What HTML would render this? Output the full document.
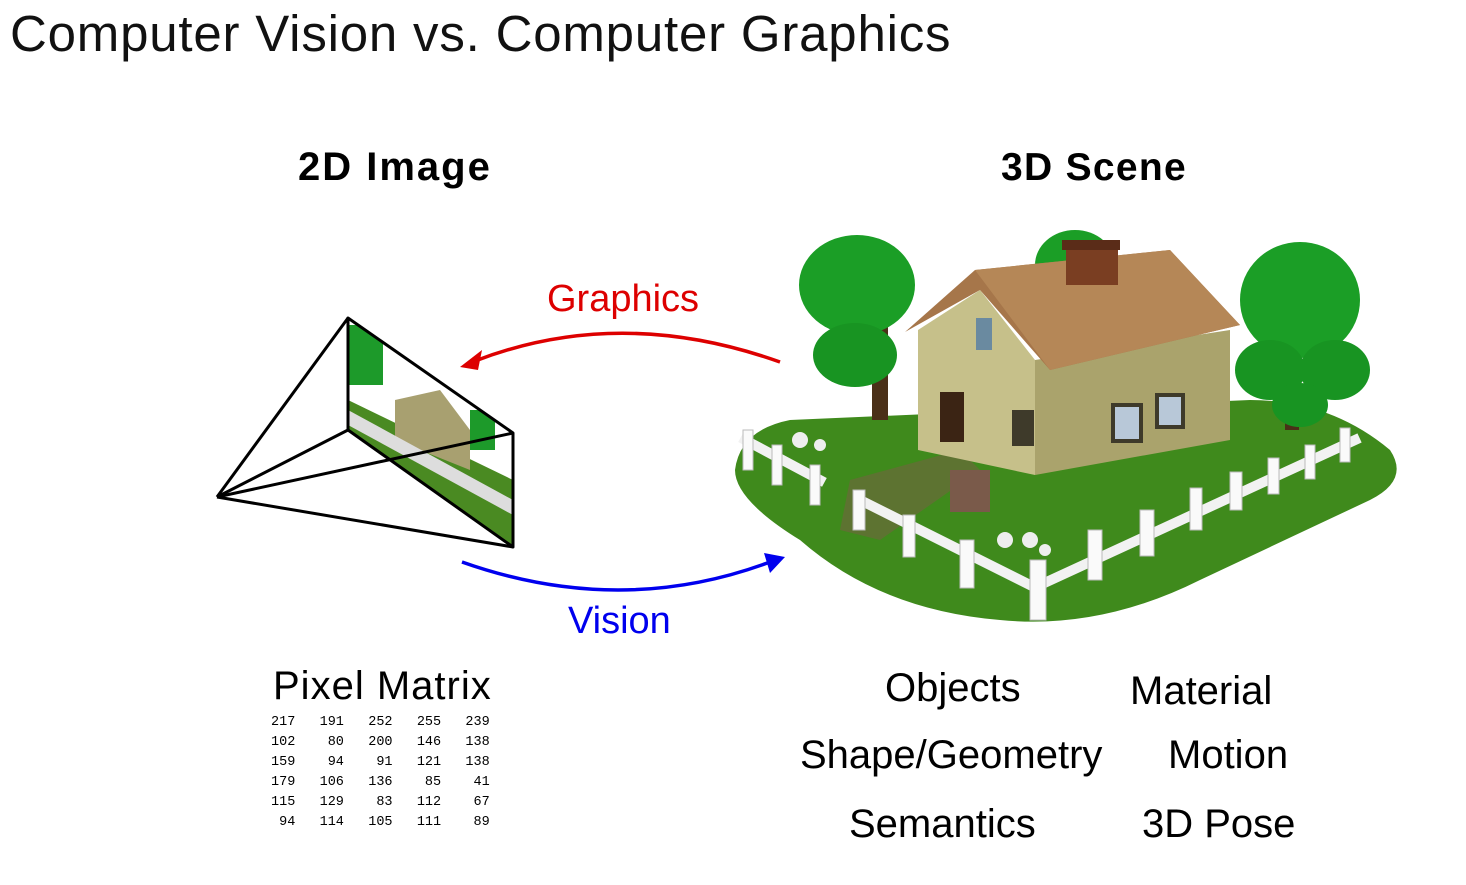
<!DOCTYPE html>
<html><head><meta charset="utf-8"><style>
body{margin:0;width:1466px;height:885px;background:#fff;overflow:hidden;position:relative;font-family:"Liberation Sans",sans-serif}
.t{position:absolute;white-space:nowrap;line-height:1}
pre{position:absolute;margin:0;font-family:"Liberation Mono",monospace;font-size:13.5px;line-height:20px;left:271px;top:713px;color:#000}
</style></head><body>
<div class="t" style="left:10px;top:8px;font-size:51px;color:#111;letter-spacing:0.8px">Computer Vision vs. Computer Graphics</div>
<div class="t" style="left:298px;top:147px;font-size:40px;font-weight:bold;letter-spacing:2px">2D Image</div>
<div class="t" style="left:1001px;top:148px;font-size:39px;font-weight:bold;letter-spacing:1.3px">3D Scene</div>
<div class="t" style="left:547px;top:280px;font-size:38px;color:#d00">Graphics</div>
<div class="t" style="left:568px;top:602px;font-size:38px;color:#00e">Vision</div>
<div class="t" style="left:273px;top:666px;font-size:40px;letter-spacing:1px">Pixel Matrix</div>
<div class="t" style="left:885px;top:668px;font-size:40px">Objects</div>
<div class="t" style="left:1130px;top:671px;font-size:40px">Material</div>
<div class="t" style="left:800px;top:735px;font-size:40px">Shape/Geometry</div>
<div class="t" style="left:1168px;top:735px;font-size:40px">Motion</div>
<div class="t" style="left:849px;top:804px;font-size:40px">Semantics</div>
<div class="t" style="left:1142px;top:804px;font-size:40px">3D Pose</div>
<pre>217   191   252   255   239
102    80   200   146   138
159    94    91   121   138
179   106   136    85    41
115   129    83   112    67
 94   114   105   111    89</pre>
<svg width="1466" height="885" style="position:absolute;left:0;top:0">
<defs>
<clipPath id="q"><polygon points="348,318 513,433 513,547 348,430"/></clipPath>
</defs>
<g clip-path="url(#q)">
<polygon points="348,318 513,433 513,547 348,430" fill="#fff"/>
<polygon points="348,400 513,480 513,547 348,430" fill="#4a8a22"/>
<polygon points="395,400 440,390 470,430 470,470 395,440" fill="#a8a070"/>
<rect x="348" y="325" width="35" height="60" fill="#1d9a2a"/>
<rect x="470" y="410" width="25" height="40" fill="#1d9a2a"/>
<polygon points="348,410 513,500 513,515 348,425" fill="#ddd"/>
</g>
<g stroke="#000" stroke-width="3" fill="none" stroke-linejoin="round">
<polygon points="348,318 513,433 513,547 348,430"/>
<line x1="217" y1="497" x2="348" y2="318"/>
<line x1="217" y1="497" x2="348" y2="430"/>
<line x1="217" y1="497" x2="513" y2="433"/>
<line x1="217" y1="497" x2="513" y2="547"/>
</g>
<path d="M780,362 Q620,305 475,361" stroke="#d00" stroke-width="3.5" fill="none"/>
<polygon points="460,367 482,350 478,370" fill="#d00"/>
<path d="M462,562 Q620,618 770,562" stroke="#00e" stroke-width="3.5" fill="none"/>
<polygon points="785,557 764,553 770,573" fill="#00e"/>
<path d="M735,470 Q740,430 790,420 L1250,400 Q1330,400 1390,450 Q1410,480 1370,500 L1200,580 Q1100,630 1000,620 Q880,610 800,540 Q735,500 735,470Z" fill="#3f8a1c"/>
<path d="M850,480 L960,450 L980,470 L880,540 L840,530Z" fill="#6b6a3a" opacity=".7"/>
<ellipse cx="1075" cy="265" rx="40" ry="35" fill="#1b9e26"/>
<rect x="872" y="320" width="16" height="100" fill="#4a3018"/>
<ellipse cx="857" cy="285" rx="58" ry="50" fill="#1b9e26"/>
<ellipse cx="855" cy="355" rx="42" ry="32" fill="#189422"/>
<rect x="1285" y="350" width="14" height="80" fill="#4a3018"/>
<ellipse cx="1300" cy="300" rx="60" ry="58" fill="#1b9e26"/>
<ellipse cx="1270" cy="370" rx="35" ry="30" fill="#189422"/>
<ellipse cx="1335" cy="370" rx="35" ry="30" fill="#189422"/>
<ellipse cx="1300" cy="405" rx="28" ry="22" fill="#189422"/>
<polygon points="918,330 980,290 1035,360 1035,475 918,450" fill="#c6c08a"/>
<polygon points="1035,360 1230,330 1230,440 1035,475" fill="#aaa36c"/>
<polygon points="905,332 975,270 1170,250 1240,325 1050,370 980,290" fill="#a6764a"/>
<polygon points="975,270 1170,250 1240,325 1050,370" fill="#b58757"/>
<rect x="1066" y="245" width="52" height="40" fill="#7a3e22"/>
<rect x="1062" y="240" width="58" height="10" fill="#5a2c18"/>
<rect x="940" y="392" width="24" height="50" fill="#3b2414"/>
<rect x="976" y="318" width="16" height="32" fill="#6a8aa0"/>
<rect x="1012" y="410" width="22" height="36" fill="#3e3a2a"/>
<rect x="1113" y="405" width="28" height="36" fill="#b8c8d8" stroke="#3e3a2a" stroke-width="4"/>
<rect x="1157" y="395" width="26" height="32" fill="#b8c8d8" stroke="#3e3a2a" stroke-width="4"/>
<rect x="950" y="470" width="40" height="42" fill="#7a5a4a"/>
<g stroke="#f2f2f2" stroke-width="10" stroke-linecap="square">
<line x1="745" y1="440" x2="820" y2="480"/>
<line x1="860" y1="500" x2="1040" y2="590"/>
<line x1="1040" y1="585" x2="1355" y2="440"/>
</g>
<g fill="#fafafa" stroke="#bbb" stroke-width="1">
<rect x="743" y="430" width="10" height="40"/><rect x="772" y="445" width="10" height="40"/><rect x="810" y="465" width="10" height="40"/>
<rect x="853" y="490" width="12" height="40"/><rect x="903" y="515" width="12" height="42"/><rect x="960" y="540" width="14" height="48"/>
<rect x="1030" y="560" width="16" height="60"/><rect x="1088" y="530" width="14" height="50"/><rect x="1140" y="510" width="14" height="46"/>
<rect x="1190" y="488" width="12" height="42"/><rect x="1230" y="472" width="12" height="38"/><rect x="1268" y="458" width="11" height="36"/>
<rect x="1305" y="445" width="10" height="34"/><rect x="1340" y="428" width="10" height="34"/>
</g>
<g fill="#eee"><circle cx="800" cy="440" r="8"/><circle cx="820" cy="445" r="6"/><circle cx="1005" cy="540" r="8"/><circle cx="1030" cy="540" r="8"/><circle cx="1045" cy="550" r="6"/></g>
</svg>
</body></html>
